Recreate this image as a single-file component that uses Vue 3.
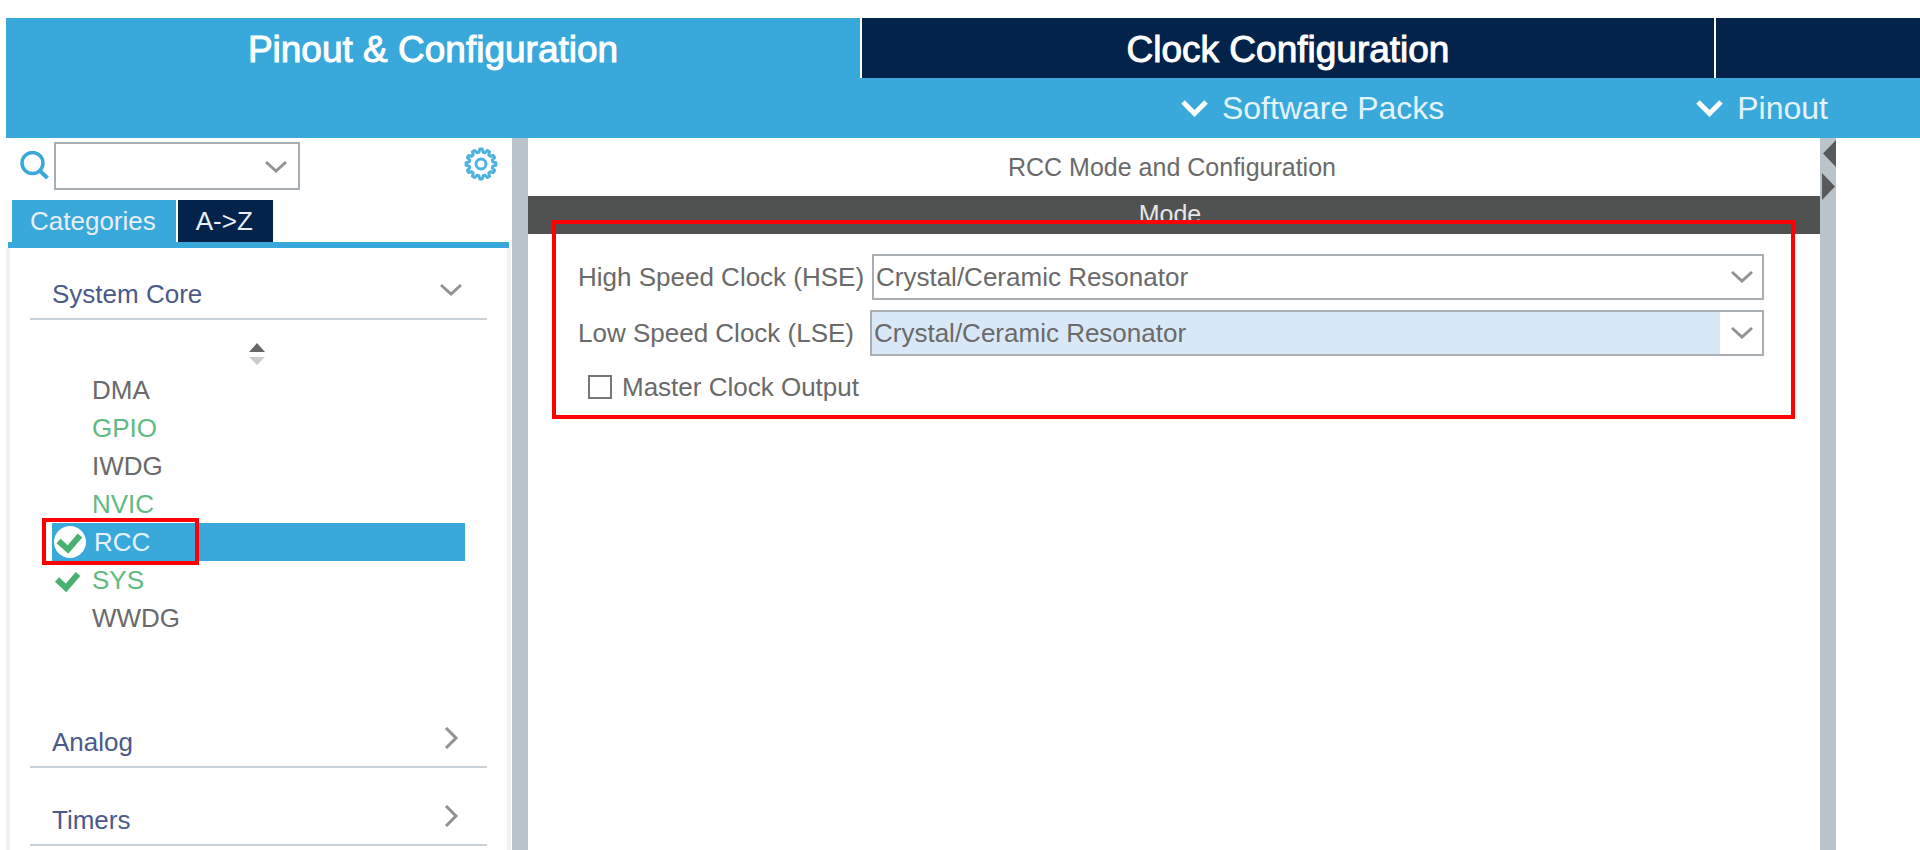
<script setup>
import { ref } from 'vue'

const peripherals = [
  { name: 'DMA', state: 'plain' },
  { name: 'GPIO', state: 'used' },
  { name: 'IWDG', state: 'plain' },
  { name: 'NVIC', state: 'used' },
  { name: 'RCC', state: 'selected' },
  { name: 'SYS', state: 'used', checked: true },
  { name: 'WWDG', state: 'plain' },
]
const closedGroups = ['Analog', 'Timers']
const hse = ref('Crystal/Ceramic Resonator')
const lse = ref('Crystal/Ceramic Resonator')
const options = ['Disable', 'BYPASS Clock Source', 'Crystal/Ceramic Resonator']
const search = ref('')
const mco = ref(false)

function gearPath(teeth, outer, inner) {
  const step = (Math.PI * 2) / teeth
  const point = (r, a) => `${(16 + r * Math.sin(a)).toFixed(2)} ${(16 - r * Math.cos(a)).toFixed(2)}`
  let d = ''
  for (let i = 0; i < teeth; i++) {
    const a = i * step
    d += `${i ? 'L' : 'M'}${point(outer, a - step * 0.16)}L${point(outer, a + step * 0.16)}`
    d += `L${point(inner, a + step * 0.34)}L${point(inner, a + step * 0.66)}`
  }
  return d + 'Z'
}
const gear = gearPath(12, 15, 12)
</script>

<template>
  <div class="app">
    <nav class="tabs">
      <button class="tab active" type="button">Pinout &amp; Configuration</button>
      <button class="tab" type="button">Clock Configuration</button>
      <div class="tab"></div>
    </nav>

    <div class="toolbar">
      <button class="menu" type="button">
        <svg width="27" height="18" viewBox="0 0 27 18"><path d="M2 3l11.500 11.500L25 3" fill="none" stroke="#fff" stroke-width="5" /></svg>
        Software Packs
      </button>
      <button class="menu" type="button">
        <svg width="27" height="18" viewBox="0 0 27 18"><path d="M2 3l11.500 11.500L25 3" fill="none" stroke="#fff" stroke-width="5" /></svg>
        Pinout
      </button>
    </div>

    <div class="body">
      <aside class="sidebar">
        <div class="search">
          <label for="search">
            <svg width="30" height="30" viewBox="0 0 30 30" fill="none" stroke="#39a9dc"><circle cx="12.500" cy="12" r="10.500" stroke-width="3.500" /><path d="M19.500 19.500L27.500 27" stroke-width="4" /></svg>
          </label>
          <div class="combo">
            <select id="search" v-model="search"><option value=""></option></select>
            <svg class="arrow" width="22" height="14" viewBox="0 0 22 14"><path d="M1 2l10 9L21 2" /></svg>
          </div>
          <button class="settings" type="button">
            <svg width="34" height="34" viewBox="-1 -1 34 34" fill="none" stroke="#4fb3e0" stroke-width="3"><path :d="gear" stroke-linejoin="round" /><circle cx="16" cy="16" r="5" /></svg>
          </button>
        </div>

        <div class="views">
          <button class="view active" type="button">Categories</button>
          <button class="view" type="button">A-&gt;Z</button>
        </div>

        <div class="tree">
          <button class="group first" type="button">
            System Core
            <svg class="chevron" width="22" height="14" viewBox="0 0 22 14"><path d="M1 2l10 9L21 2" /></svg>
          </button>
          <div class="list">
            <button class="sort" type="button">
              <svg width="18" height="24" viewBox="0 0 18 24"><path d="M9 1l8 9H1z" fill="#666" /><path d="M9 23l8-8H1z" fill="#ccc" /></svg>
            </button>
            <ul>
              <li v-for="p in peripherals" :key="p.name" :class="p.state">
                <button type="button">
                  <svg class="mark" width="36" height="38" viewBox="0 0 36 38">
                    <circle v-if="p.state === 'selected'" cx="18" cy="19" r="16" fill="#fff" />
                    <path v-if="p.state === 'selected'" d="M6.500 18l9.500 8.500 12-14" fill="none" stroke="#49b170" stroke-width="6" />
                    <path v-if="p.checked" d="M5 18.500l9 8.500 12-14" fill="none" stroke="#49b170" stroke-width="6" />
                  </svg>
                  {{ p.name }}
                </button>
                <span v-if="p.state === 'selected'" class="frame"></span>
              </li>
            </ul>
          </div>
          <button v-for="g in closedGroups" :key="g" class="group" type="button">
            {{ g }}
            <svg class="chevron" width="22" height="22" viewBox="0 0 22 22"><path d="M6 1l10 10L6 21" /></svg>
          </button>
        </div>
      </aside>

      <div class="splitter"></div>

      <main class="content">
        <h1>RCC Mode and Configuration</h1>
        <h2>Mode</h2>
        <section class="mode">
          <div class="field">
            <label for="hse">High Speed Clock (HSE)</label>
            <div class="combo">
              <select id="hse" v-model="hse"><option v-for="o in options" :key="o">{{ o }}</option></select>
              <svg class="arrow" width="22" height="14" viewBox="0 0 22 14"><path d="M1 2l10 9L21 2" /></svg>
            </div>
          </div>
          <div class="field low">
            <label for="lse">Low Speed Clock (LSE)</label>
            <div class="combo focused">
              <select id="lse" v-model="lse"><option v-for="o in options" :key="o">{{ o }}</option></select>
              <svg class="arrow" width="22" height="14" viewBox="0 0 22 14"><path d="M1 2l10 9L21 2" /></svg>
            </div>
          </div>
          <label class="check"><input v-model="mco" type="checkbox" />Master Clock Output</label>
          <span class="frame"></span>
        </section>
      </main>

      <div class="splitter right">
        <svg width="16" height="64" viewBox="0 0 16 64" fill="#58595b"><path d="M16 2v27L3 15.500zM2 35v27l13-13.500z" /></svg>
      </div>
      <div class="pane"></div>
    </div>
  </div>
</template>

<style>
body {
  background: #fff;
}
</style>

<style scoped>
.app {
  box-sizing: border-box;
  display: flex;
  flex-direction: column;
  height: 100vh;
  padding: 18px 0 0 6px;
  overflow: hidden;
  font-family: "Liberation Sans", Arial, sans-serif;
  font-size: 26px;
  line-height: 38px;
  color: #6a6a6a;
}
button {
  margin: 0;
  padding: 0;
  border: 0;
  background: none;
  font: inherit;
  color: inherit;
  text-align: left;
}
svg {
  display: block;
  flex: none;
}
.tabs {
  display: grid;
  grid-template-columns: 854fr 852fr 204fr;
  gap: 2px;
  flex: none;
}
.tab {
  box-sizing: border-box;
  min-height: 60px;
  padding-top: 4px;
  background: #03234b;
  color: #fff;
  font-size: 37px;
  text-align: center;
  -webkit-text-stroke: 1px #fff;
}
.tab.active {
  background: #39a9dc;
}
.toolbar {
  display: flex;
  justify-content: flex-end;
  align-items: center;
  gap: 252px;
  flex: none;
  height: 60px;
  padding-right: 92px;
  background: #39a9dc;
  color: #e4f3fb;
  font-size: 32px;
}
.menu {
  display: flex;
  align-items: center;
  gap: 14px;
}
.body {
  display: flex;
  flex: 1;
  min-height: 0;
}
.sidebar {
  display: flex;
  flex-direction: column;
  flex: none;
  width: 506px;
}
.search {
  display: flex;
  align-items: center;
  padding: 4px 14px 0 14px;
}
.search .combo {
  flex: none;
  width: 246px;
  margin-left: 4px;
}
.search select {
  height: 48px;
}
.settings {
  margin: 0 0 4px auto;
}
.views {
  display: flex;
  gap: 2px;
  margin: 10px 3px 0 2px;
  padding-left: 4px;
  border-bottom: 6px solid #39a9dc;
}
.view {
  height: 42px;
  padding: 0 20px 0 18px;
  background: #03234b;
  color: #e8eef4;
}
.view.active {
  background: #39a9dc;
}
.tree {
  display: flow-root;
  flex: 1;
  margin-right: 1px;
  padding: 0 20px;
  border: solid #eff2f4;
  border-width: 0 4px;
}
.group {
  display: flex;
  justify-content: space-between;
  align-items: center;
  box-sizing: border-box;
  width: 100%;
  height: 50px;
  margin-top: 28px;
  padding: 0 25px 0 22px;
  border-bottom: 2px solid #c8d1d7;
  color: #4a5a8a;
}
.group.first {
  margin-top: 22px;
}
.chevron {
  margin-bottom: 8px;
}
.chevron path,
.arrow path {
  fill: none;
  stroke: #929292;
  stroke-width: 3;
}
.list {
  padding: 22px 22px 53px;
}
.sort {
  display: block;
  height: 29px;
  margin: 0 auto;
  padding-right: 4px;
  line-height: 24px;
}
.sort svg {
  margin-bottom: 5px;
}
ul {
  margin: 0;
  padding: 0;
  list-style: none;
}
li {
  position: relative;
}
li button {
  display: flex;
  width: 100%;
  gap: 4px;
}
.used {
  color: #5fbb82;
}
.selected {
  background: #39a9dc;
  color: #e4f3fb;
}
.selected button {
  gap: 6px;
}
.frame {
  position: absolute;
  border: 4px solid #f00;
  pointer-events: none;
}
li .frame {
  inset: -5px 266px -4px -10px;
}
.splitter {
  flex: none;
  width: 16px;
  background: #b8c3ca;
}
.content {
  flex: 1292;
  min-width: 0;
}
.pane {
  flex: 84;
}
h1,
h2 {
  margin: 0;
  font-size: 25px;
  font-weight: 400;
  text-align: center;
}
h1 {
  padding: 10px 4px 10px 0;
}
h2 {
  padding: 0 8px 2px 0;
  background: #505251;
  color: #e6e6e6;
  line-height: 36px;
}
.mode {
  position: relative;
  display: flex;
  flex-direction: column;
  gap: 10px;
  padding: 20px 56px 0 50px;
}
.mode .frame {
  inset: -14px 25px -9px 24px;
}
.field {
  display: flex;
  align-items: center;
}
.field label {
  flex: none;
  width: 294px;
}
.field.low label {
  width: 292px;
}
.combo {
  position: relative;
  flex: 1;
  min-width: 0;
}
select {
  display: block;
  box-sizing: border-box;
  width: 100%;
  height: 46px;
  padding: 0 44px 0 2px;
  border: 2px solid #a8afb4;
  border-radius: 0;
  background: #fff;
  appearance: none;
  font: inherit;
  color: inherit;
}
.focused select {
  background: linear-gradient(to left, #fff 42px, #d8e8f7 42px);
}
.arrow {
  position: absolute;
  right: 11px;
  top: 16px;
  pointer-events: none;
}
.search .arrow {
  right: 13px;
  top: 18px;
}
.check {
  display: flex;
  align-items: center;
  gap: 10px;
  padding: 2px 0 4px 10px;
}
.check input {
  width: 24px;
  height: 24px;
  margin: 0;
  border: 2px solid #777;
  background: #fff;
  appearance: none;
}
.check input:checked {
  background: #39a9dc;
}
</style>
